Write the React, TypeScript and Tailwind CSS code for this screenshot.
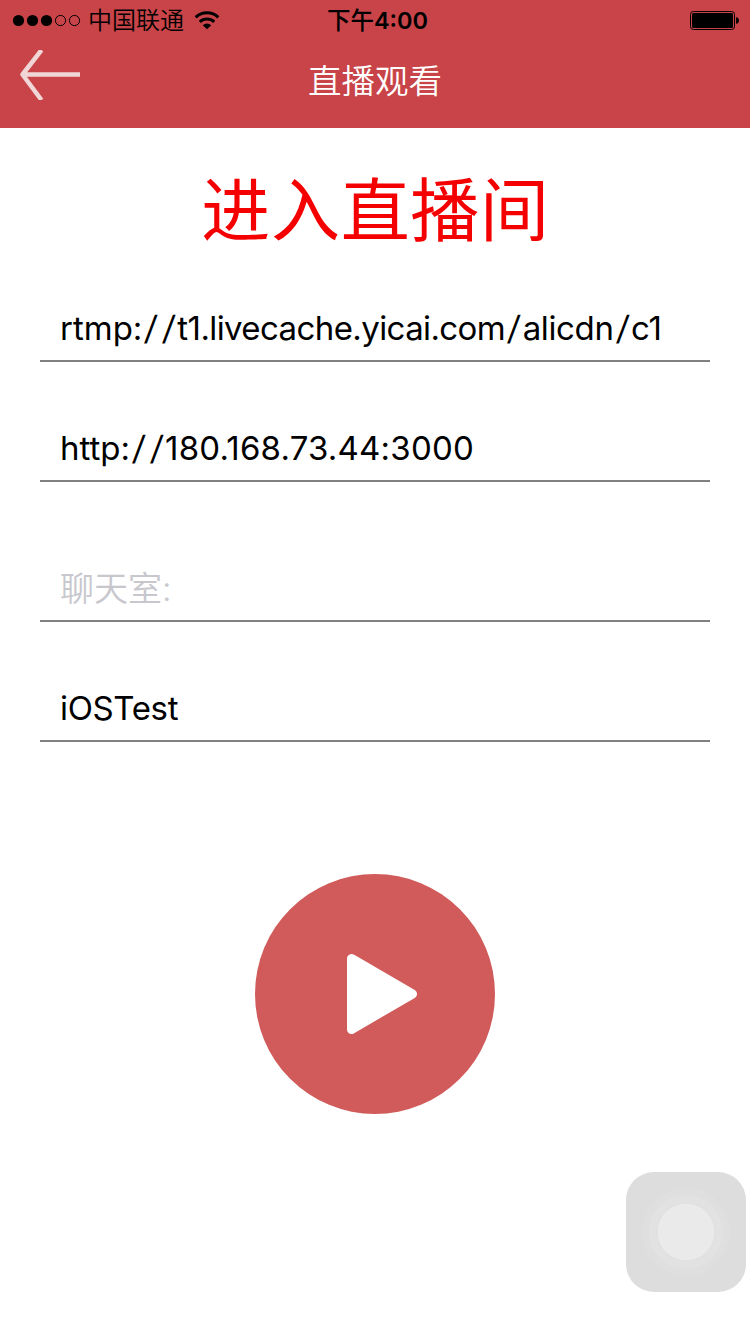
const fontStack = "font-['Inter','Noto_Sans_CJK_SC',sans-serif]";

function StatusBar() {
  return (
    <div className="grid h-10 grid-cols-3 items-center text-black">
      <div className="flex items-center pl-3">
        <svg className="h-4 w-[70px]" viewBox="0 0 70 16">
          <circle cx="6.5" cy="8.5" r="5.6" />
          <circle cx="20.5" cy="8.5" r="5.6" />
          <circle cx="34.5" cy="8.5" r="5.6" />
          <circle cx="48.5" cy="8.5" r="5.1" fill="none" stroke="#000" />
          <circle cx="62.5" cy="8.5" r="5.1" fill="none" stroke="#000" />
        </svg>
        <span className="ml-[6px] pt-[2px] text-2xl leading-[38px] font-[350] whitespace-nowrap">中国联通</span>
        <svg className="ml-[10px] h-5 w-[26px]" viewBox="0 0 26 20">
          <g fill="none" stroke="#000" strokeWidth="3">
            <path d="M1.7 7.3a16.4 16.4 0 0 1 22.6 0" />
            <path d="M5.8 11.8a10.4 10.4 0 0 1 14.4 0" />
          </g>
          <path d="M8.8 15.2a6 6 0 0 1 8.4 0L13 19.2Z" />
        </svg>
      </div>
      <p className="pt-[2px] pl-[5px] text-center text-[23.5px] leading-[38px] font-medium whitespace-nowrap">
        下午<span className="font-semibold">4:00</span>
      </p>
      <div className="flex justify-end pr-[10px]">
        <svg className="h-5 w-[50px]" viewBox="0 0 50 20">
          <rect x=".5" y="1.5" width="44" height="18" rx="3" fill="none" stroke="#000" />
          <rect x="2" y="3" width="41" height="15" rx="1.5" />
          <path d="M46 7.2c2 0 3 1.4 3 3.3s-1 3.3-3 3.3Z" />
        </svg>
      </div>
    </div>
  );
}

function NavBar() {
  return (
    <div className="grid h-[88px] grid-cols-[80px_1fr_80px] items-start">
      <button className="mt-[10px] ml-5 h-[50px] w-[60px]" aria-label="返回">
        <svg className="h-[50px] w-[60px]" viewBox="0 0 60 50" fill="none" stroke="#f1d6d8" strokeWidth="4.5">
          <path d="M60 24.5H2.5M21.5 0 2.5 24.5 21.5 50" strokeLinejoin="round" />
        </svg>
      </button>
      <h1 className="text-center text-[33.5px] leading-[82px] font-[350] text-white">直播观看</h1>
    </div>
  );
}

function Value({ text }: { text: string }) {
  return (
    <span className="text-[33px] tracking-[-0.35px]">
      {text.split(/(\/)/).map((part, i) => {
        if (part === "/") {
          return (
            <span key={i} className="inline-block w-[17.5px] -skew-x-6 text-center">
              /
            </span>
          );
        }
        let tracking = "";
        if (/^[\d.:]+$/.test(part)) tracking = "tracking-[0.2px]";
        else if (part.endsWith(":")) tracking = "tracking-[0px]";
        else if (part.includes(".")) tracking = "tracking-[-0.6px]";
        return (
          <span key={i} className={tracking}>
            {part}
          </span>
        );
      })}
    </span>
  );
}

function Field({ value, placeholder }: { value?: string; placeholder?: string }) {
  return (
    <div className="flex h-[62px] items-center border-b-2 border-[#808080] pb-[2px] pl-5 whitespace-nowrap">
      {value ? (
        <Value text={value} />
      ) : (
        <span className="pb-[2px] text-[34px] font-[350] text-[#c7c7cd]">{placeholder}</span>
      )}
    </div>
  );
}

export default function App() {
  return (
    <div className={`flex h-[1334px] w-[750px] flex-col bg-white ${fontStack}`}>
      <header className="h-32 bg-[#c84448]">
        <StatusBar />
        <NavBar />
      </header>
      <main className="flex flex-col">
        <h2 className="mt-[41px] h-[83px] pl-px text-center text-[69px] leading-[84px] tracking-[0.7px] text-[#f50000]">
          进入直播间
        </h2>
        <form className="mx-10 mt-12 flex flex-col">
          <Field value="rtmp://t1.livecache.yicai.com/alicdn/c1" />
          <div className="h-[58px]" />
          <Field value="http://180.168.73.44:3000" />
          <div className="h-[78px]" />
          <Field placeholder="聊天室:" />
          <div className="h-[58px]" />
          <Field value="iOSTest" />
        </form>
        <button className="mt-[132px] size-60 self-center rounded-full bg-[#d15a5a]" aria-label="播放">
          <svg className="size-60" viewBox="0 0 240 240">
            <path
              d="M96.5 84.5v71L157.5 120Z"
              fill="#fff"
              stroke="#fff"
              strokeWidth="9"
              strokeLinejoin="round"
            />
          </svg>
        </button>
        <div className="mt-[58px] mr-1 size-[120px] self-end rounded-[28px] bg-[#dddddd]">
          <svg className="size-[120px]" viewBox="0 0 120 120">
            <circle cx="60" cy="60" r="44" fill="#dfdfdf" />
            <circle cx="60" cy="60" r="37" fill="#e2e2e2" />
            <circle cx="60" cy="60" r="29" fill="#eaeaea" stroke="#dfdfdf" />
          </svg>
        </div>
      </main>
    </div>
  );
}
